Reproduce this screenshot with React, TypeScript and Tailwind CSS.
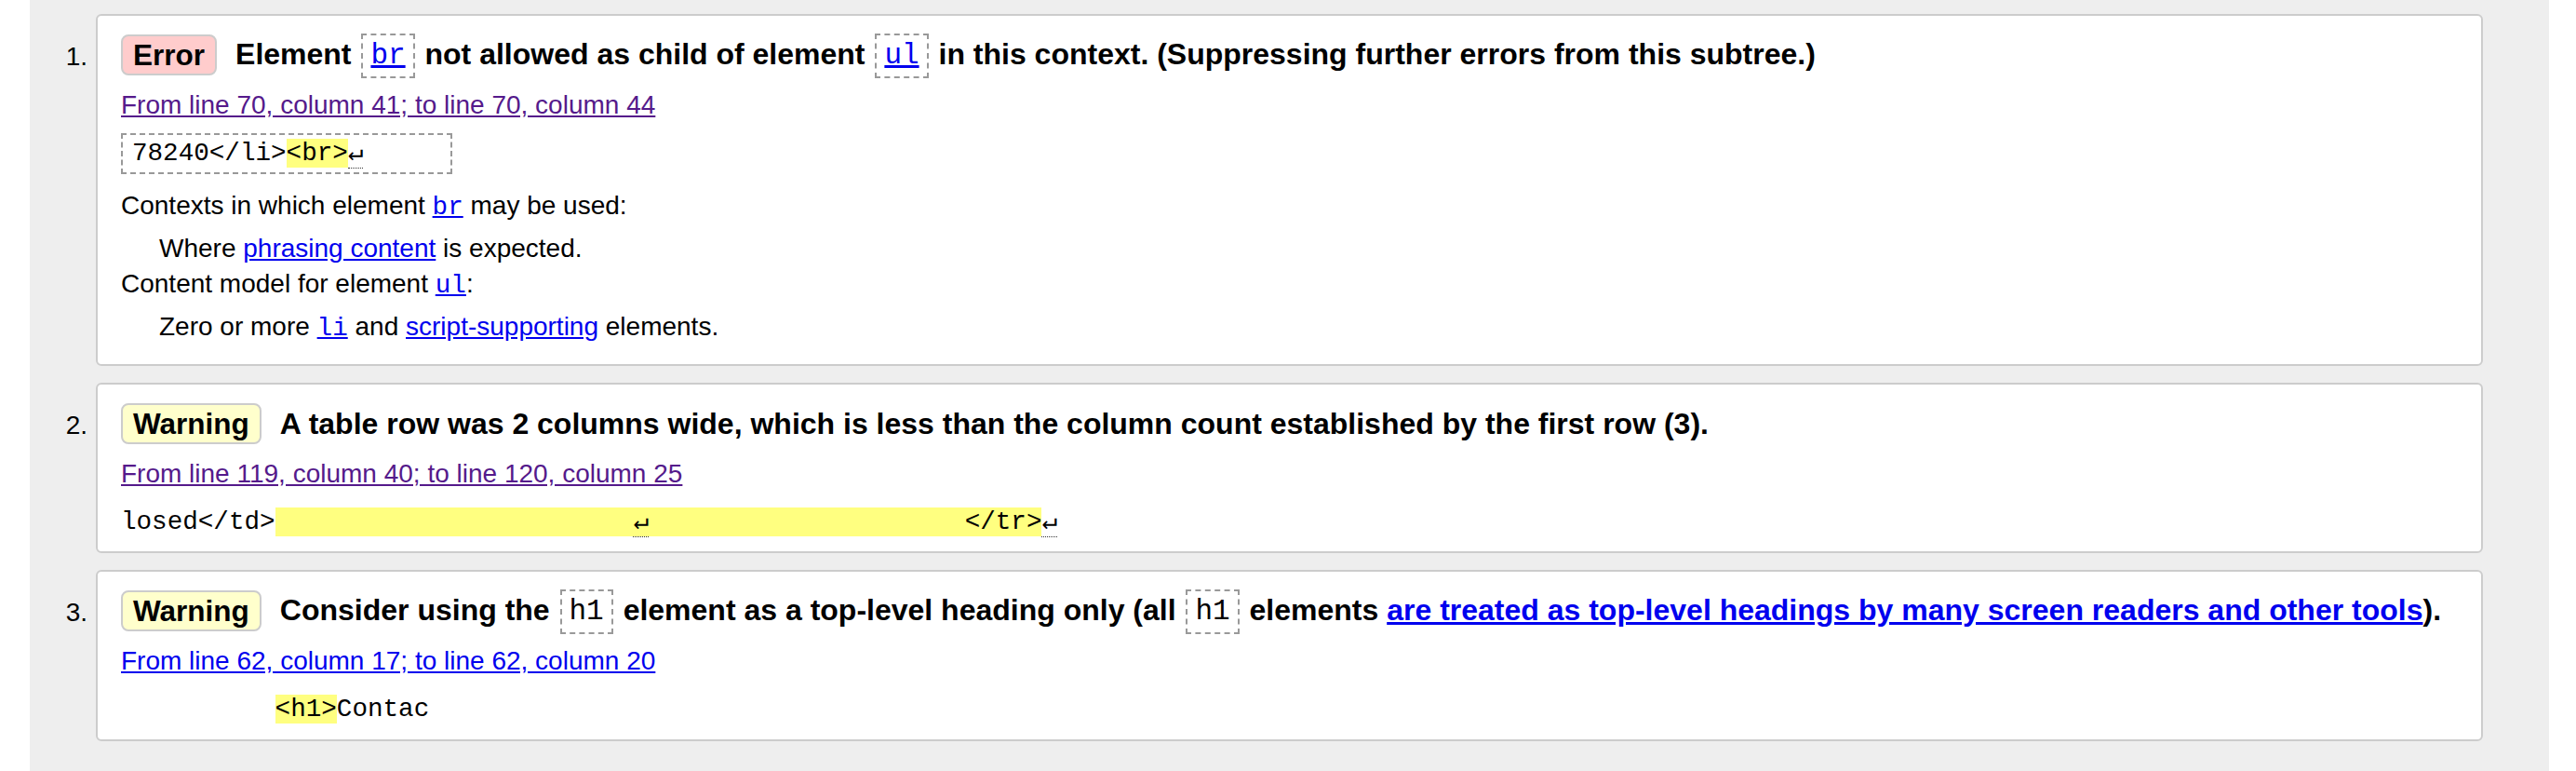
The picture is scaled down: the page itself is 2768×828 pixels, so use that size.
import React from "react";

const sans = "font-['Liberation_Sans',Arial,Helvetica,sans-serif]";
const mono = "font-['Liberation_Mono','DejaVu_Sans_Mono',monospace]";

const Badge: React.FC<{ kind: "error" | "warning" }> = ({ kind }) => (
  <span
    className={
      kind === "error"
        ? "shrink-0 rounded-[8px] border-2 border-[#ccc] bg-[#fcc] px-[11px] text-[31.5px] font-bold leading-[40px]"
        : "shrink-0 rounded-[8px] border-2 border-[#ccc] bg-[#ffc] px-[11px] text-[31.5px] font-bold leading-[40px]"
    }
  >
    {kind === "error" ? "Error" : "Warning"}
  </span>
);

// dashed box around an element name in the heading
const Boxed: React.FC<{ children: React.ReactNode; link?: boolean }> = ({ children, link }) => (
  <span
    className={`mx-[2px] inline-block h-[48px] border-2 border-dashed border-[#999] px-[8px] align-middle text-[31px] font-normal leading-[44px] ${mono}`}
  >
    {link ? <a className="text-[#00e] underline">{children}</a> : children}
  </span>
);

const MonoLink: React.FC<{ children: React.ReactNode }> = ({ children }) => (
  <a className={`text-[27.6px] text-[#00e] underline ${mono}`}>{children}</a>
);

const Return: React.FC<{ wide?: boolean }> = ({ wide }) => (
  <span className={wide ? "inline-block w-[29px] pl-[4px]" : ""}>
    <span className="border-b border-dotted border-[#333]">↵</span>
  </span>
);

const Mark: React.FC<{ children: React.ReactNode }> = ({ children }) => (
  <span className="bg-[#ffff80]">{children}</span>
);

const Item: React.FC<{ n: number; children: React.ReactNode }> = ({ n, children }) => (
  <li className="flex items-baseline">
    <span className="w-[71px] shrink-0 pr-[9px] text-right text-[28px]">{n}.</span>
    <div className="flex-1 rounded-[6px] border-2 border-[#ccc] bg-white pl-[25px] pr-[25px]">
      {children}
    </div>
  </li>
);

const Source: React.FC<{ children: React.ReactNode; visited?: boolean }> = ({ children, visited }) => (
  <a
    className={
      visited
        ? "mt-[14px] block text-[28px] leading-[32px] text-[#551a8b] underline"
        : "mt-[14px] block text-[28px] leading-[32px] text-[#00e] underline"
    }
  >
    {children}
  </a>
);

export default function App() {
  return (
    <div className={`flex min-h-screen bg-white pl-[32px] pr-[29px] text-black ${sans}`}>
      <ol className="flex flex-1 flex-col gap-[18px] bg-[#eee] pb-[25px] pr-[71px] pt-[15px]">
        <Item n={1}>
          <div className="mt-[18px] flex h-[48px] items-center">
            <Badge kind="error" />
            <span className="ml-[20px] whitespace-nowrap text-[32px] font-bold leading-[48px]">
              Element <Boxed link>br</Boxed> not allowed as child of element <Boxed link>ul</Boxed> in this
              context. (Suppressing further errors from this subtree.)
            </span>
          </div>
          <Source visited>From line 70, column 41; to line 70, column 44</Source>
          <div
            className={`mt-[14px] w-[356px] whitespace-pre border-2 border-dashed border-[#999] py-[4px] pl-[10px] text-[27.6px] leading-[32px] ${mono}`}
          >
            78240&lt;/li&gt;<Mark>&lt;br&gt;</Mark>
            <Return />
          </div>
          <div className="mt-[15px] pb-[19px] text-[28px] leading-[38px]">
            <p>
              Contexts in which element <MonoLink>br</MonoLink> may be used:
            </p>
            <p className="mt-[6px] pl-[41px]">
              Where <a className="text-[#00e] underline">phrasing content</a> is expected.
            </p>
            <p>
              Content model for element <MonoLink>ul</MonoLink>:
            </p>
            <p className="mt-[6px] pl-[41px]">
              Zero or more <MonoLink>li</MonoLink> and{" "}
              <a className="text-[#00e] underline">script-supporting</a> elements.
            </p>
          </div>
        </Item>

        <Item n={2}>
          <div className="mt-[18px] flex h-[48px] items-center">
            <Badge kind="warning" />
            <span className="ml-[20px] whitespace-nowrap text-[32px] font-bold leading-[48px]">
              A table row was 2 columns wide, which is less than the column count established by the first row (3).
            </span>
          </div>
          <Source visited>From line 119, column 40; to line 120, column 25</Source>
          <div className={`mt-[14px] whitespace-pre pb-[15px] pt-[6px] text-[27.6px] leading-[32px] ${mono}`}>
            losed&lt;/td&gt;
            <Mark>
              {"                       "}
              <Return wide />
              {"                    "}&lt;/tr&gt;
            </Mark>
            <Return />
          </div>
        </Item>

        <Item n={3}>
          <div className="mt-[18px] flex h-[48px] items-center">
            <Badge kind="warning" />
            <span className="ml-[20px] whitespace-nowrap text-[32px] font-bold leading-[48px]">
              Consider using the <Boxed>h1</Boxed> element as a top-level heading only (all <Boxed>h1</Boxed>{" "}
              elements{" "}
              <a className="text-[#00e] underline">
                are treated as top-level headings by many screen readers and other tools
              </a>
              ).
            </span>
          </div>
          <Source>From line 62, column 17; to line 62, column 20</Source>
          <div className={`mt-[14px] whitespace-pre pb-[16px] pt-[6px] text-[27.6px] leading-[32px] ${mono}`}>
            {"          "}
            <Mark>&lt;h1&gt;</Mark>Contac
          </div>
        </Item>
      </ol>
    </div>
  );
}
